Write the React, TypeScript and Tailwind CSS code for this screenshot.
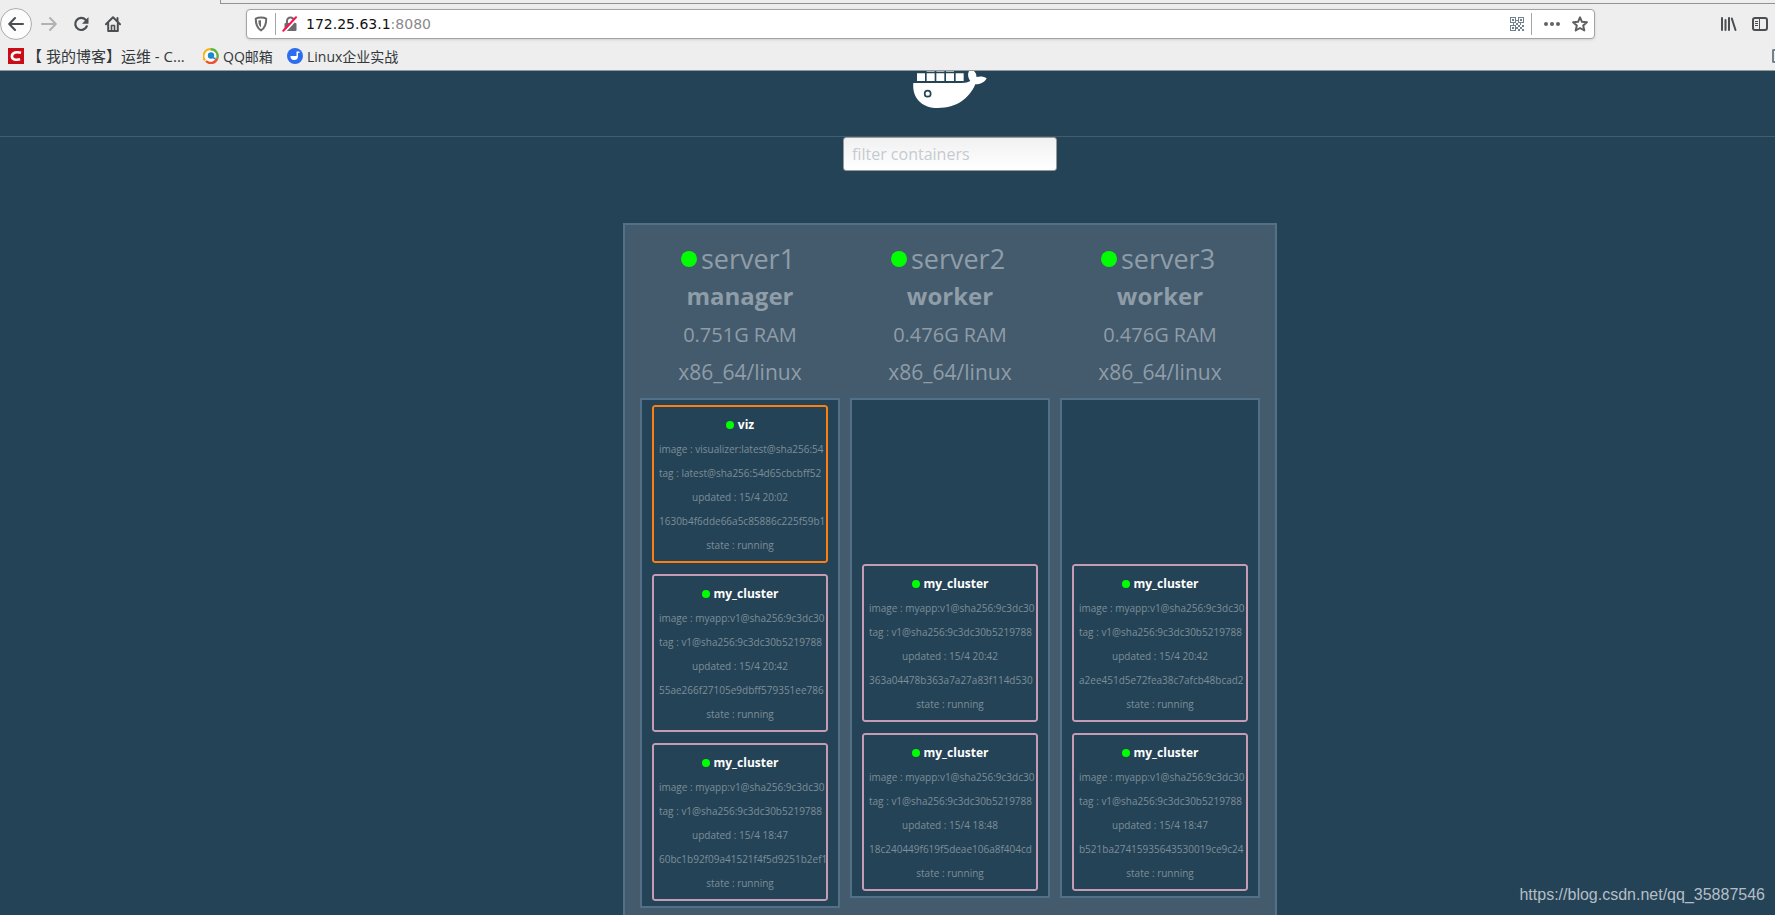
import { useState } from 'react'

type Task = {
  name: string
  image: string
  tag: string
  updated: string
  id: string
}

type ServerNode = {
  name: string
  role: string
  ram: string
  tasks: Task[]
}

const clusterImage = 'myapp:v1@sha256:9c3dc30'
const clusterTag = 'v1@sha256:9c3dc30b5219788'

function clusterTask(updated: string, id: string): Task {
  return { name: 'my_cluster', image: clusterImage, tag: clusterTag, updated, id }
}

const nodes: ServerNode[] = [
  {
    name: 'server1',
    role: 'manager',
    ram: '0.751G RAM',
    tasks: [
      {
        name: 'viz',
        image: 'visualizer:latest@sha256:54',
        tag: 'latest@sha256:54d65cbcbff52',
        updated: '15/4 20:02',
        id: '1630b4f6dde66a5c85886c225f59b1'
      },
      clusterTask('15/4 20:42', '55ae266f27105e9dbff579351ee786'),
      clusterTask('15/4 18:47', '60bc1b92f09a41521f4f5d9251b2ef1')
    ]
  },
  {
    name: 'server2',
    role: 'worker',
    ram: '0.476G RAM',
    tasks: [
      clusterTask('15/4 20:42', '363a04478b363a7a27a83f114d530'),
      clusterTask('15/4 18:48', '18c240449f619f5deae106a8f404cd')
    ]
  },
  {
    name: 'server3',
    role: 'worker',
    ram: '0.476G RAM',
    tasks: [
      clusterTask('15/4 20:42', 'a2ee451d5e72fea38c7afcb48bcad2'),
      clusterTask('15/4 18:47', 'b521ba27415935643530019ce9c24')
    ]
  }
]

function BackIcon() {
  return (
    <svg width="16" height="16" viewBox="0 0 16 16" fill="none" stroke="currentColor" strokeWidth="2" strokeLinecap="round" strokeLinejoin="round">
      <path d="M15 8H1.5M7 2 1.2 8 7 14" />
    </svg>
  )
}

function ForwardIcon() {
  return (
    <svg width="16" height="16" viewBox="0 0 16 16" fill="none" stroke="currentColor" strokeWidth="2" strokeLinecap="round" strokeLinejoin="round">
      <path d="M1 8h13.5M9 2l5.8 6L9 14" />
    </svg>
  )
}

function ReloadIcon() {
  return (
    <svg width="16" height="16" viewBox="0 0 16 16">
      <path d="M12.6 3.8A6 6 0 1 0 13.8 10.3" fill="none" stroke="currentColor" strokeWidth="2.2" strokeLinecap="round" />
      <path d="M15.5 1v6.2a.6.6 0 0 1-.6.6H9z" fill="currentColor" />
    </svg>
  )
}

function HomeIcon() {
  return (
    <svg width="16" height="16" viewBox="0 0 16 16" fill="none" stroke="currentColor" strokeWidth="2" strokeLinecap="round" strokeLinejoin="round">
      <path d="M1 8.2 8 1.3l7 6.9" />
      <path d="M3.2 7.5V15h9.6V7.5M12.5 2v3" />
      <path d="M6.5 15V9.5h3V15" strokeWidth="1.6" />
    </svg>
  )
}

function ShieldIcon() {
  return (
    <svg width="14" height="16" viewBox="0 0 14 16">
      <path d="M7 1.6c2 0 4 .4 5.2 1 .1 5.2-.4 9.2-5.2 11.8C2.2 11.8 1.7 7.8 1.8 2.6 3 2 5 1.600 7 1.600z" fill="none" stroke="#6b6b6b" strokeWidth="2" strokeLinejoin="round" />
      <path d="M7 4.2v7.3c-2.2-1.6-2.600-3.800-2.600-6.900.8-.3 1.700-.4 2.600-.4z" fill="#6b6b6b" />
    </svg>
  )
}

function InsecureIcon() {
  return (
    <svg width="16" height="16" viewBox="0 0 16 16">
      <rect x="2.5" y="7" width="12" height="8" rx="1" fill="#6b6b6b" />
      <path d="M5 7V5a3.5 3.5 0 0 1 7 0v2" fill="none" stroke="#6b6b6b" strokeWidth="2" />
      <path d="M3 15.500 15 2.500" stroke="#fff" strokeWidth="2" />
      <path d="M1.300 14.700 14 1.300" stroke="#ff1150" strokeWidth="2" strokeLinecap="round" />
    </svg>
  )
}

function QrIcon() {
  return (
    <svg width="14" height="14" viewBox="0 0 14 14" fill="#71808c">
      <path fillRule="evenodd" d="M0 0h6v6H0zM1 1v4h4V1zM8 0h6v6H8zM9 1v4h4V1zM0 8h6v6H0zM1 9v4h4V9z" />
      <path d="M2 2h2v2H2zM10 2h2v2h-2zM2 10h2v2H2zM6 3h2v1H6zM3 6h1v2H3zM6 6h2v2H6zM10 6h1v2h-1zM8 8h2v2H8zM12 8h2v2h-2zM10 10h2v2h-2zM8 12h2v2H8zM12 12h2v2h-2zM6 10h2v2H6z" />
    </svg>
  )
}

function DotsIcon() {
  return (
    <svg width="16" height="16" viewBox="0 0 16 16" fill="#636363">
      <circle cx="2" cy="8" r="2" />
      <circle cx="8" cy="8" r="2" />
      <circle cx="14" cy="8" r="2" />
    </svg>
  )
}

function StarIcon() {
  return (
    <svg width="16" height="16" viewBox="0 0 16 16" fill="none" stroke="#5f5f5f" strokeWidth="2" strokeLinejoin="round">
      <path d="m8 1.3 2 4.500 4.900.5-3.700 3.300 1.100 4.900L8 12l-4.300 2.500 1.100-4.900L1.100 6.300 6 5.800z" />
    </svg>
  )
}

function LibraryIcon() {
  return (
    <svg width="16" height="16" viewBox="0 0 16 16" fill="none" stroke="#4a4f52" strokeWidth="2" strokeLinecap="round">
      <path d="M1 2v12M4.5 4v10M8 2v12M10.8 2.5 14.5 14" />
    </svg>
  )
}

function SidebarIcon() {
  return (
    <svg width="16" height="16" viewBox="0 0 16 16" fill="none" stroke="#4a4f52">
      <rect x="1" y="2" width="14" height="12" rx="2" strokeWidth="2" />
      <path d="M7.5 2v12M3 5.5h3M3 7.500h3M3 9.500h3" />
    </svg>
  )
}

function CsdnIcon() {
  return (
    <svg width="16" height="16" viewBox="0 0 16 16">
      <rect width="16" height="16" fill="#ca0c16" />
      <path d="M13 4.800C9 3.600 4.200 4.400 3.900 8.100c-.2 3.500 4.200 4.200 8.200 3.200" fill="none" stroke="#fff" strokeWidth="2.600" />
    </svg>
  )
}

function QQMailIcon() {
  return (
    <svg width="16" height="16" viewBox="0 0 16 16">
      <circle cx="8" cy="8" r="7.5" fill="#fff" />
      <path d="M2 12.5A7 7 0 0 1 7.500 1.200" fill="none" stroke="#fcb316" strokeWidth="2.200" />
      <path d="M7.500 1.300a6.800 6.800 0 0 1 6.700 9.200" fill="none" stroke="#5fb336" strokeWidth="2.400" />
      <path d="M14.200 10.500A6.800 6.800 0 0 1 3 13" fill="none" stroke="#f0502b" strokeWidth="2.400" />
      <circle cx="8" cy="7.500" r="3.200" fill="#1c88cf" />
      <path d="M8 9.500h4.500v2.200z" fill="#1c88cf" />
    </svg>
  )
}

function LinuxBookIcon() {
  return (
    <svg width="16" height="16" viewBox="0 0 16 16">
      <circle cx="8" cy="8" r="8" fill="#2b6cf0" />
      <path d="M3.5 8h6V3.500h3V5H11v3.500a3.700 3.700 0 0 1-7.500-.5z" fill="#fff" />
    </svg>
  )
}

function DockerWhale() {
  return (
    <svg className="ml-[2px]" width="74" height="37" viewBox="0 0 222 111" fill="#fff" role="img" aria-label="Docker">
      <path d="M41 0h24v3H41zM70 0h24v3H70zM99 0h24v3H99z" opacity=".6" />
      <path d="M12 7h24v23H12zM41 7h24v23H41zM70 7h24v23H70zM99 7h24v23H99zM128 7h24v23h-24z" />
      <path d="M1 36h144c12 0 21-2 27-6-7-9-9-20-4-30h15c5 5 8 11 7 18 11-3 23-2 31 4-6 12-19 18-34 18-19 43-56 71-112 71C25 111-3 79 1 36z" />
      <circle cx="44" cy="68" r="9" stroke="#254356" strokeWidth="5" />
    </svg>
  )
}

function BrowserChrome() {
  const [url, setUrl] = useState('172.25.63.1:8080')
  const [host, port] = url.split(':')

  return (
    <header className="h-[71px] bg-[#eeeeee] border-b border-[#96999a] text-[#4a4f52]">
      <div className="flex h-1">
        <div className="w-[220px]" />
        <div className="flex-1 border-l border-b border-[#929292]" />
      </div>

      <div className="flex items-center h-10">
        <nav className="flex items-center w-[246px] shrink-0">
          <button aria-label="Back" className="flex items-center justify-center size-8 mr-[9px] rounded-full border border-[#ababab] bg-[#fcfcfc]">
            <BackIcon />
          </button>
          <button aria-label="Forward" className="mr-4 text-[#b2b2b2]">
            <ForwardIcon />
          </button>
          <button aria-label="Reload" className="mr-4">
            <ReloadIcon />
          </button>
          <button aria-label="Home">
            <HomeIcon />
          </button>
        </nav>

        <div className="flex flex-1 items-center h-[30px] rounded-[4px] border border-[#a3a3a3] bg-white pl-[7px] pr-1.5 shadow-sm">
          <ShieldIcon />
          <div className="w-px h-[22px] ml-[7px] mr-1.5 bg-[#a6a6a6]" />
          <InsecureIcon />
          <button
            className="flex-1 pl-2 text-left text-[14px] font-['DejaVu_Sans',sans-serif] text-[#111]"
            onClick={() => setUrl('172.25.63.1:8080')}
          >
            {host}
            <span className="text-[#8a8a8a]">:{port}</span>
          </button>
          <QrIcon />
          <div className="w-px h-[22px] ml-[7px] mr-3 bg-[#a6a6a6]" />
          <button aria-label="Page actions" className="mr-3">
            <DotsIcon />
          </button>
          <button aria-label="Bookmark this page">
            <StarIcon />
          </button>
        </div>

        <div className="flex items-center w-[180px] shrink-0 pl-[126px] gap-[15px]">
          <button aria-label="Library">
            <LibraryIcon />
          </button>
          <button aria-label="Sidebars">
            <SidebarIcon />
          </button>
        </div>
      </div>

      <div className="flex items-center h-6 pl-2 text-[14px] text-[#33383a] whitespace-nowrap font-['Open_Sans','Noto_Sans_CJK_SC',sans-serif]">
        <a href="#blog" className="flex items-center gap-[3px] w-[195px] text-[15px]">
          <CsdnIcon />
          <span>【 我的博客】运维 - C...</span>
        </a>
        <a href="#mail" className="flex items-center gap-1 w-[84px]">
          <QQMailIcon />
          <span>QQ邮箱</span>
        </a>
        <a href="#linux" className="flex items-center gap-1">
          <LinuxBookIcon />
          <span>Linux企业实战</span>
        </a>
        <div className="ml-auto w-[3px] h-[14px] rounded-l-[2px] border-2 border-r-0 border-[#71808c]" />
      </div>
    </header>
  )
}

function TaskCard({ task }: { task: Task }) {
  const border = task.name === 'viz' ? 'border-[#ff7f0e]' : 'border-[#c49cb5]'

  return (
    <li className="overflow-hidden rounded-[3px]">
      <div className={`rounded-[3px] border-2 px-[5px] pt-[6px] pb-[4px] ${border}`}>
        <div className="flex items-center justify-center gap-1 h-6 text-[12px] font-bold text-white">
          <span className="size-2 rounded-full bg-[#00ff00]" />
          {task.name}
        </div>
        <div className="text-center text-[10px] leading-6 whitespace-nowrap text-[#7c8e99]">
          <p>image : {task.image}</p>
          <p>tag : {task.tag}</p>
          <p>updated : {task.updated}</p>
          <p>{task.id}</p>
          <p>state : running</p>
        </div>
      </div>
    </li>
  )
}

function NodeColumn({ node, filter }: { node: ServerNode; filter: string }) {
  const tasks = node.tasks.filter((t) => t.name.includes(filter))

  return (
    <section className="w-[200px]">
      <div className="text-center text-[#8f9da8]">
        <h2 className="flex items-center justify-center gap-1 h-9 pr-1 text-[27px]">
          <span className="size-4 rounded-full bg-[#00ff00]" />
          {node.name}
        </h2>
        <p className="text-[24px] leading-[38px] font-bold">{node.role}</p>
        <p className="text-[20px] leading-[40px]">{node.ram}</p>
        <p className="text-[21px] leading-[34px]">x86_64/linux</p>
      </div>
      <ul className="flex flex-col justify-end gap-[11px] min-h-[500px] mt-[9px] border-2 border-[#527087] bg-[#254356] px-[10px] py-[5px]">
        {tasks.map((t) => (
          <TaskCard key={t.id} task={t} />
        ))}
      </ul>
    </section>
  )
}

export default function App() {
  const [filter, setFilter] = useState('')

  return (
    <div className="flex flex-col h-screen overflow-hidden bg-[#254356] font-['Open_Sans',sans-serif]">
      <BrowserChrome />

      <main className="flex-1 min-h-0 overflow-hidden">
        <div className="flex justify-center h-[66px] pl-[123px] border-b border-[#435d70]">
          <DockerWhale />
        </div>

        <div className="flex flex-col items-center pl-[125px]">
          <input
            type="text"
            aria-label="filter containers"
            placeholder="filter containers"
            value={filter}
            onChange={(e) => setFilter(e.target.value)}
            className="w-[214px] h-[34px] rounded-[3px] border border-[#999] bg-linear-to-b from-[#f1f1f1] to-white px-2 text-[16px] text-[#254356] placeholder:text-[#c5cbd0] outline-none"
          />

          <div className="flex items-start gap-[10px] mt-[52px] border-2 border-[#527087] bg-[#445b6d] px-[15px] pt-[16px] pb-[30px]">
            {nodes.map((node) => (
              <NodeColumn key={node.name} node={node} filter={filter} />
            ))}
          </div>
        </div>
      </main>

      <div className="absolute right-[10px] bottom-2 text-[16px] text-[#b4bec6] font-['Liberation_Sans',sans-serif]">
        https://blog.csdn.net/qq_35887546
      </div>
    </div>
  )
}
